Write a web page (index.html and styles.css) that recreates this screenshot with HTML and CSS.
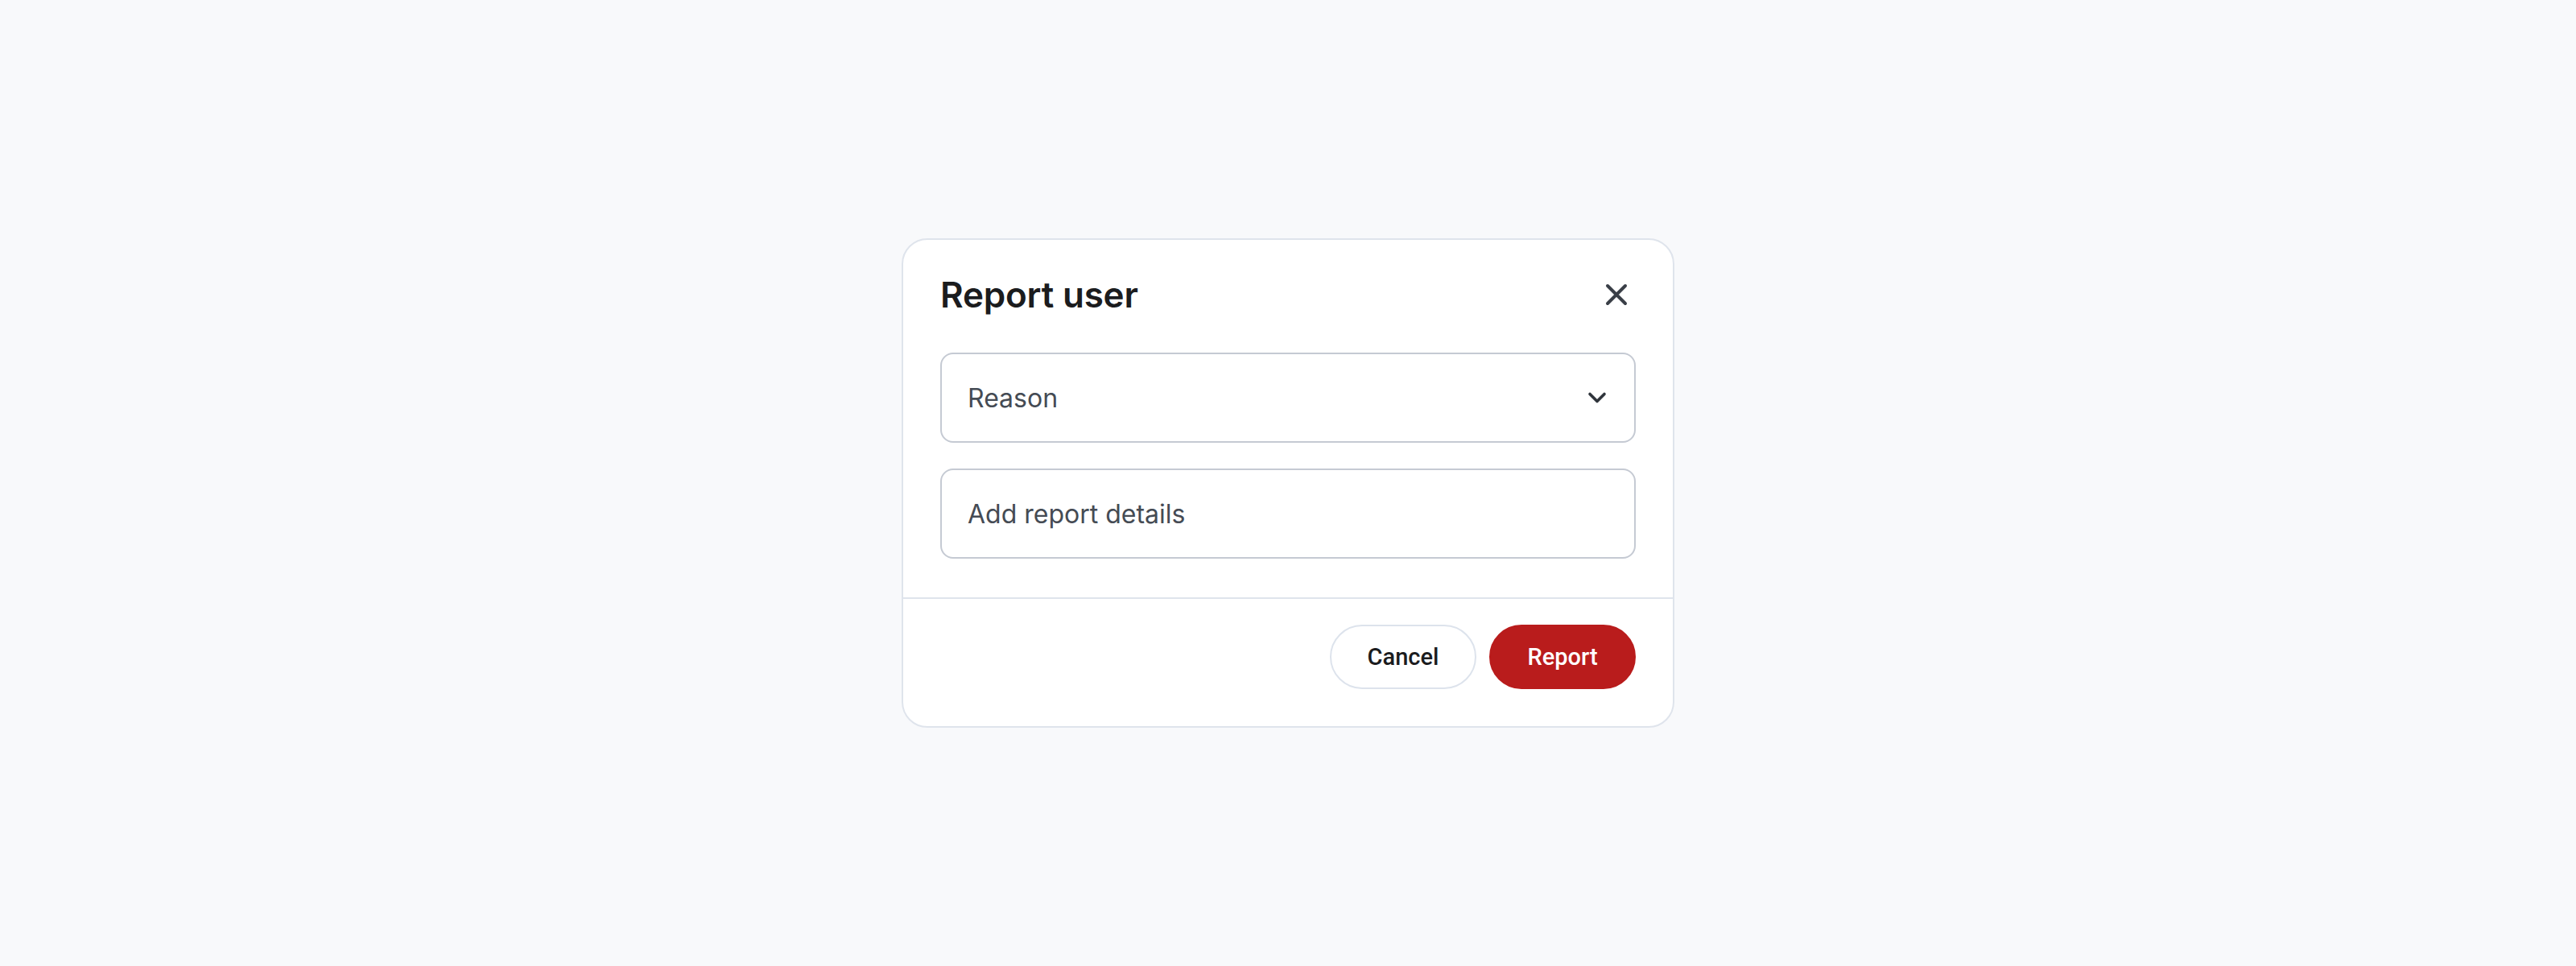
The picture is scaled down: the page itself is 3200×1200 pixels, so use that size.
FILE: index.html
```html
<!DOCTYPE html>
<html lang="en">
<head>
<meta charset="utf-8">
<title>Report user</title>
<link rel="stylesheet" href="styles.css">
</head>
<body>
<div class="page">
  <div class="dialog" role="dialog" aria-labelledby="dlg-title">
    <div class="dialog-body">
      <div class="dialog-header">
        <h2 id="dlg-title" class="dialog-title">Report user</h2>
        <button class="close-btn" aria-label="Close">
          <svg width="48" height="48" viewBox="0 0 48 48" fill="none" stroke="#3a3f47" stroke-width="4" stroke-linecap="round"><path d="M13 13 L35 35 M35 13 L13 35"/></svg>
        </button>
      </div>
      <div class="field field-select">
        <span class="field-text">Reason</span>
        <svg class="chevron" width="28" height="28" viewBox="0 0 28 28" fill="none" stroke="#2f343b" stroke-width="3.6" stroke-linecap="round" stroke-linejoin="round"><path d="M5 9.5 L14 18.5 L23 9.5"/></svg>
      </div>
      <div class="field">
        <span class="field-text">Add report details</span>
      </div>
    </div>
    <div class="dialog-footer">
      <button class="btn btn-secondary">Cancel</button>
      <button class="btn btn-danger">Report</button>
    </div>
  </div>
</div>
</body>
</html>
```

FILE: styles.css
```css
* { box-sizing: border-box; }
html, body { margin: 0; padding: 0; }
body {
  background: #f8f9fb;
  font-family: "Inter", "Liberation Sans", sans-serif;
}
.page {
  width: 3200px;
  height: 1200px;
  display: flex;
  align-items: center;
  justify-content: center;
}
.dialog {
  width: 960px;
  height: 608px;
  background: #ffffff;
  border: 2px solid #dfe4ec;
  border-radius: 32px;
  display: flex;
  flex-direction: column;
}
.dialog-body {
  padding: 40px 46px 48px 46px;
  display: flex;
  flex-direction: column;
  gap: 32px;
  border-bottom: 2px solid #dfe4ec;
}
.dialog-header {
  height: 56px;
  display: flex;
  align-items: center;
  justify-content: space-between;
  margin-bottom: 12px;
}
.dialog-title {
  margin: 0;
  font-size: 44px;
  line-height: 56px;
  font-weight: 600;
  color: #1b1c1e;
  letter-spacing: -0.2px;
}
.close-btn {
  width: 48px;
  height: 48px;
  padding: 0;
  border: 0;
  background: transparent;
  display: flex;
  align-items: center;
  justify-content: center;
}
.field {
  height: 112px;
  border: 2px solid #c5cad3;
  border-radius: 16px;
  padding: 0 32px;
  display: flex;
  align-items: center;
  justify-content: space-between;
}
.field-text {
  font-size: 32px;
  color: #454b54;
}
.chevron { margin-right: 0; }
.dialog-footer {
  padding: 32px 46px 0 46px;
  display: flex;
  justify-content: flex-end;
  gap: 16px;
}
.btn {
  height: 80px;
  min-width: 182px;
  padding: 0 44px;
  border-radius: 40px;
  font-family: "Roboto", "Liberation Sans", sans-serif;
  font-size: 29px;
  font-weight: 500;
  display: flex;
  align-items: center;
  justify-content: center;
}
.btn-secondary {
  background: #ffffff;
  border: 2px solid #dde3ec;
  color: #1b1c1e;
}
.btn-danger {
  background: #b91c1c;
  border: 2px solid #b91c1c;
  color: #ffffff;
}
```
